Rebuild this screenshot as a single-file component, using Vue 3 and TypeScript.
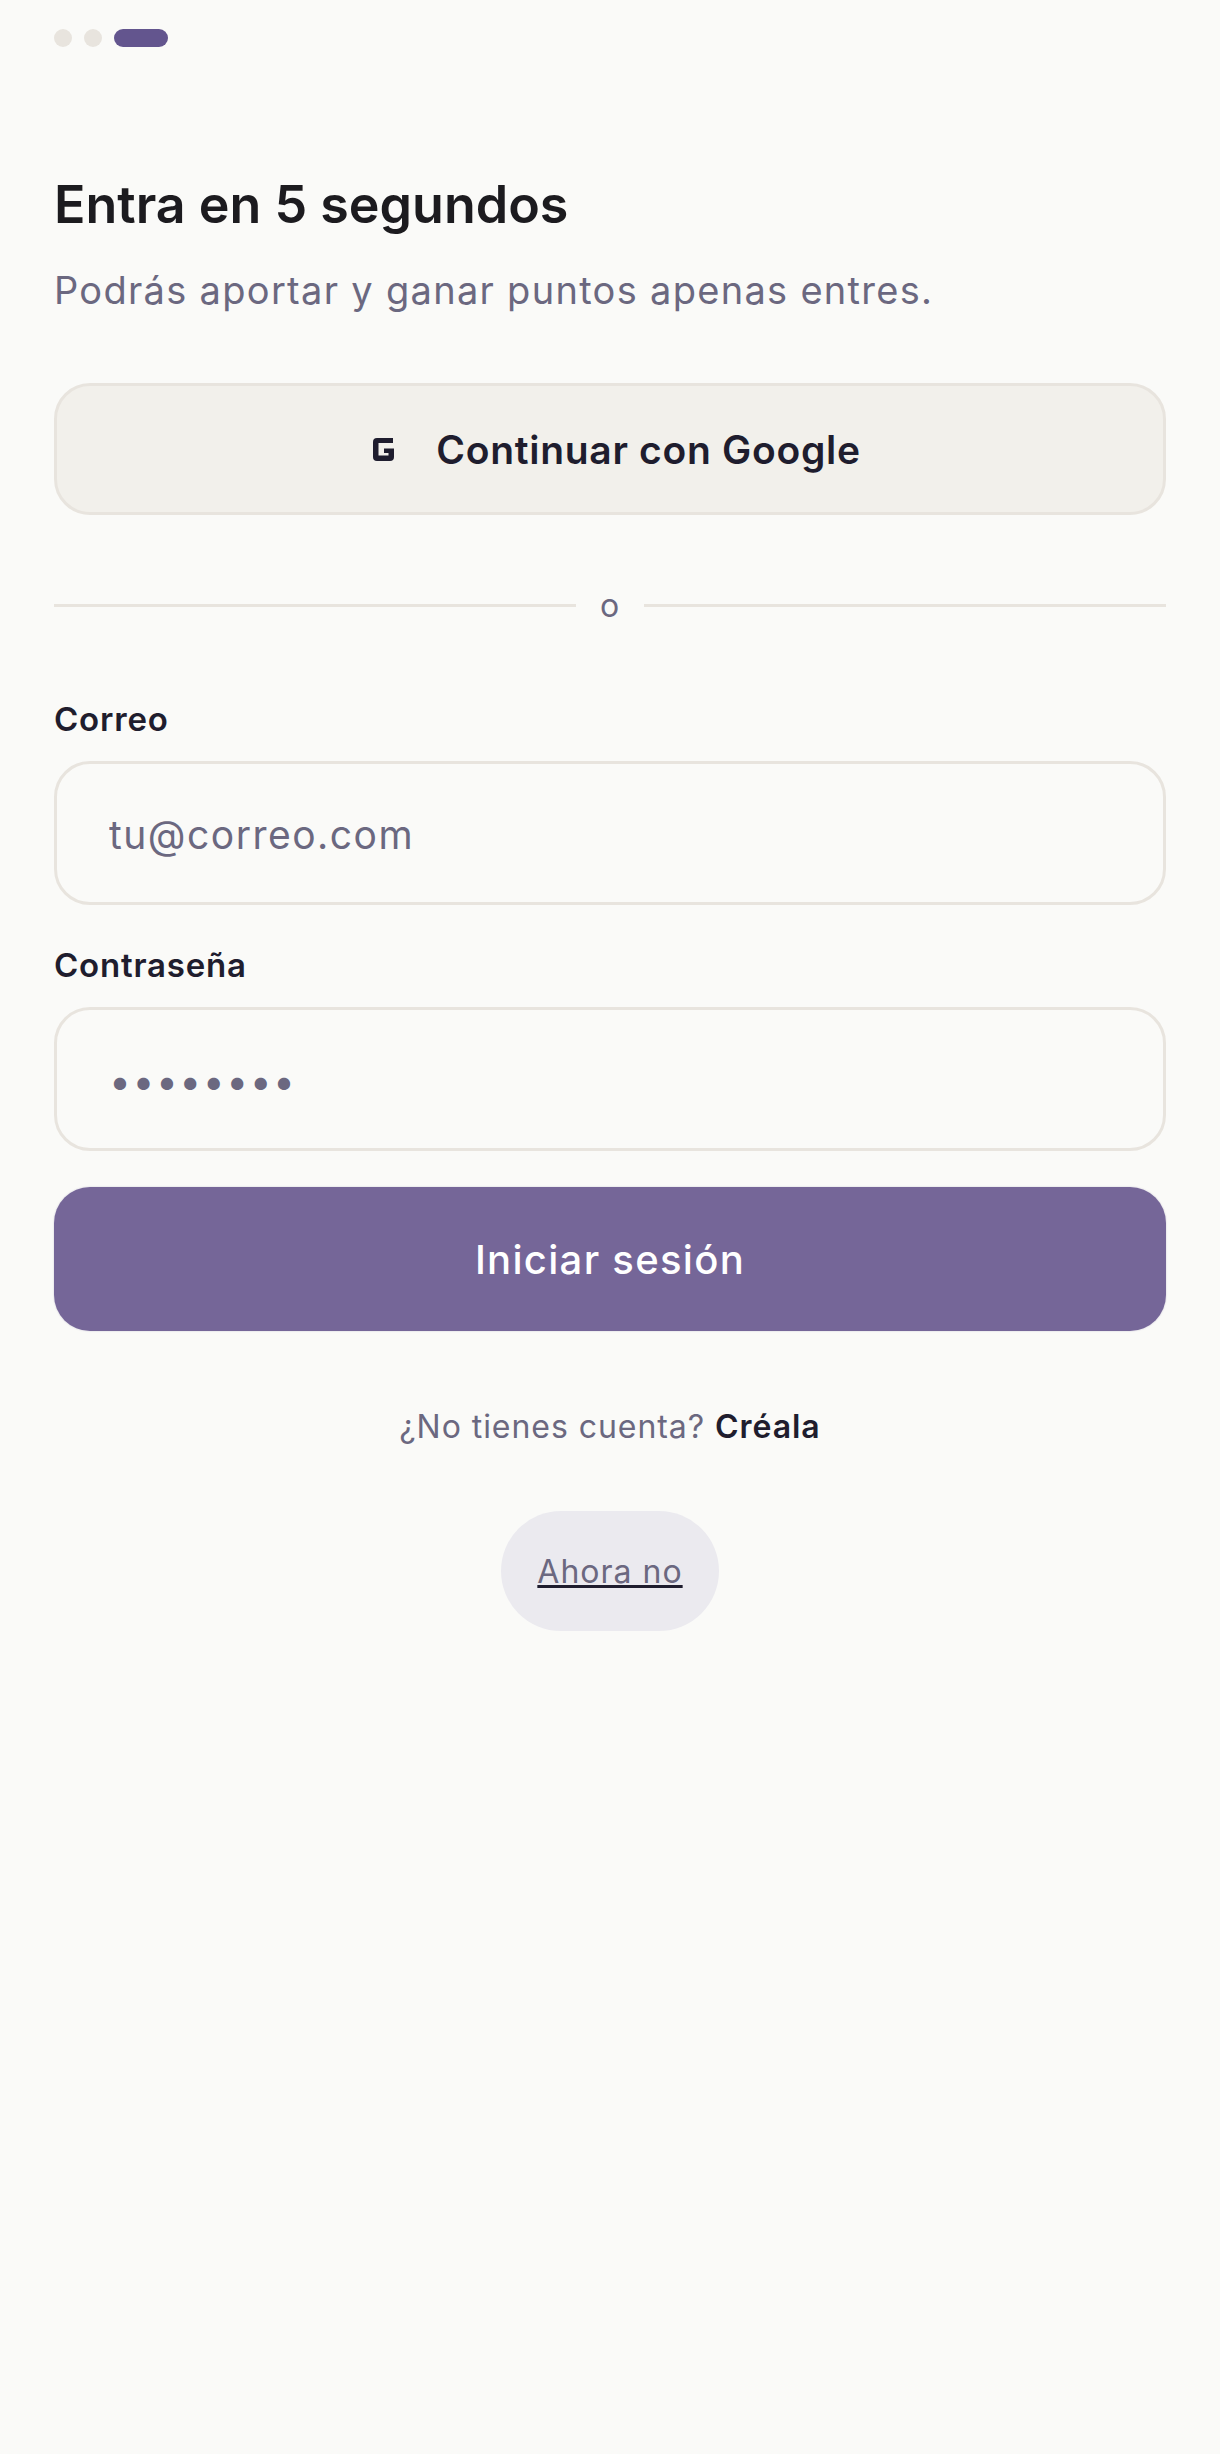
<script setup lang="ts">
const steps = [false, false, true]
</script>

<template>
  <main class="screen">
    <div class="steps">
      <span v-for="(active, i) in steps" :key="i" class="step" :class="{ active }"></span>
    </div>

    <h1>Entra en 5 segundos</h1>
    <p class="lead">Podrás aportar y ganar puntos apenas entres.</p>

    <button class="google" type="button">
      <svg class="g-icon" viewBox="0 0 21 23" width="21" height="23" aria-hidden="true">
        <path d="M4 0H20V5H5.5V17.5H15.5V15H11V10.5H21V19a4 4 0 0 1-4 4H4a4 4 0 0 1-4-4V4a4 4 0 0 1 4-4Z" fill="#1f1d2e" />
      </svg>
      Continuar con Google
    </button>

    <div class="divider"><span>o</span></div>

    <label class="label first" for="email">Correo</label>
    <input id="email" class="field" type="email" placeholder="tu@correo.com" />

    <label class="label second" for="password">Contraseña</label>
    <input id="password" class="field" type="password" value="12345678" />

    <button class="submit" type="button">Iniciar sesión</button>

    <p class="signup">¿No tienes cuenta? <strong>Créala</strong></p>

    <button class="later" type="button">Ahora no</button>
  </main>
</template>

<style>
  html, body {
    margin: 0;
    background: #fafaf8;
  }
</style>

<style scoped>
  .screen {
    box-sizing: border-box;
    display: flex;
    flex-direction: column;
    min-height: 2454px;
    padding: 29px 54px 0;
    background: #fafaf8;
    font-family: Inter, "Liberation Sans", sans-serif;
    color: #1f1d2e;
  }

  .steps {
    display: flex;
    gap: 12px;
    height: 18px;
  }

  .step {
    width: 18px;
    height: 18px;
    border-radius: 9px;
    background: #e8e4de;
  }

  .step.active {
    width: 54px;
    background: #63558e;
  }

  h1 {
    margin: 128px 0 0;
    font-size: 52px;
    line-height: 60px;
    font-weight: 600;
    color: #1c1b1f;
  }

  .lead {
    margin: 30px 0 0;
    font-size: 38px;
    line-height: 50px;
    color: #6b6880;
    letter-spacing: 1.3px;
  }

  .google {
    display: flex;
    align-items: center;
    justify-content: center;
    gap: 42px;
    height: 132px;
    margin-top: 68px;
    padding: 0 0 0 14px;
    border: 3px solid #e8e4de;
    border-radius: 36px;
    background: #f2f0eb;
    color: #1f1d2e;
    font: 600 39px Inter, "Liberation Sans", sans-serif;
    letter-spacing: 0.7px;
  }

  .g-icon {
    flex: none;
  }

  .divider {
    display: flex;
    align-items: center;
    gap: 24px;
    margin-top: 71px;
    color: #6b6880;
    font-size: 32px;
    line-height: 40px;
    letter-spacing: 1px;
  }

  .divider::before,
  .divider::after {
    content: "";
    flex: 1;
    height: 3px;
    margin-bottom: 2px;
    background: #e8e4de;
  }

  .label {
    font-size: 33px;
    line-height: 40px;
    font-weight: 600;
    letter-spacing: 0.8px;
  }

  .label.first {
    margin-top: 73px;
  }

  .label.second {
    margin-top: 40px;
  }

  .field {
    box-sizing: border-box;
    height: 144px;
    margin-top: 22px;
    padding: 2px 52px 0;
    border: 3px solid #e8e4de;
    border-radius: 36px;
    background: #fafaf8;
    color: #6b6880;
    font: 400 39px Inter, "Liberation Sans", sans-serif;
    letter-spacing: 1.5px;
    outline: none;
  }

  .field::placeholder {
    color: #6b6880;
    opacity: 1;
  }

  .submit {
    height: 144px;
    margin-top: 36px;
    border: 0;
    border-radius: 36px;
    background: #756698;
    box-shadow: 0 0 1px 1px #ecebee;
    color: #fff;
    font: 500 40px Inter, "Liberation Sans", sans-serif;
    letter-spacing: 1.3px;
  }

  .signup {
    margin: 74px 0 0;
    text-align: center;
    font-size: 32px;
    line-height: 44px;
    letter-spacing: 0.95px;
    color: #6b6880;
  }

  .signup strong {
    font-weight: 600;
    color: #1f1d2e;
  }

  .later {
    align-self: center;
    width: 218px;
    height: 120px;
    margin-top: 62px;
    border: 0;
    border-radius: 60px;
    background: #ebeaef;
    color: #6b6880;
    font: 400 32px Inter, "Liberation Sans", sans-serif;
    letter-spacing: 1px;
    text-decoration: underline;
    text-decoration-color: #1f1d2e;
  }
</style>
